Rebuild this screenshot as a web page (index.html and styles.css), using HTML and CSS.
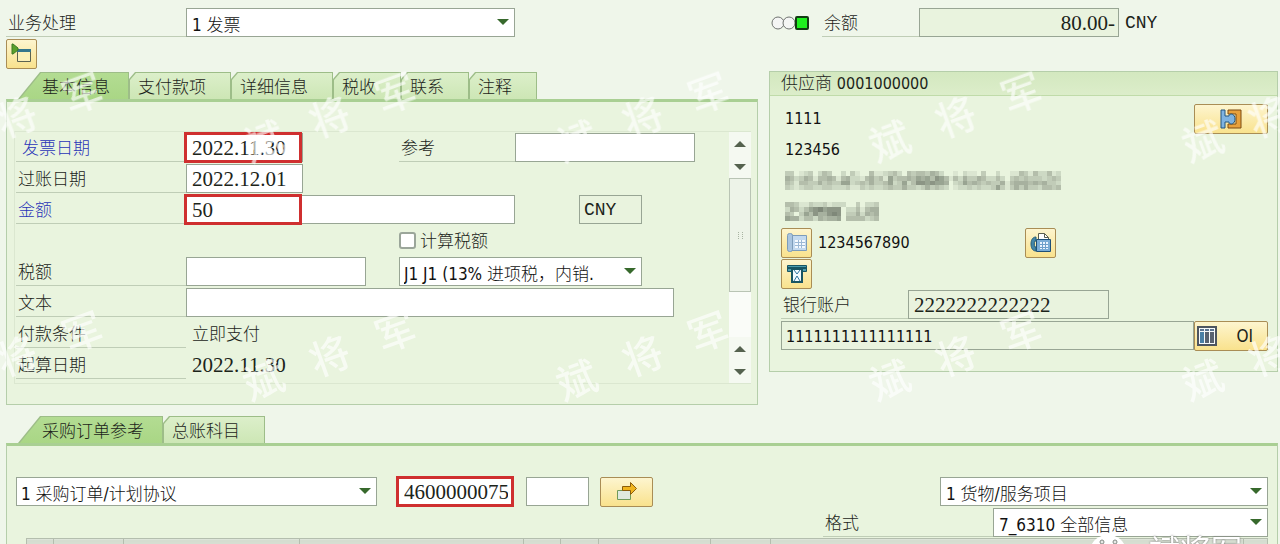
FILE: index.html
```html
<!DOCTYPE html>
<html lang="zh-CN">

<head>
  <meta charset="utf-8">
  <title>发票</title>
  <link rel="stylesheet" href="styles.css">
</head>

<body>
  <main class="page">
    <div class="top">
      <section class="left">
        <div class="row">
          <label class="label wide-label" for="action">业务处理</label>
          <div class="select action-select">
            <select id="action"><option>1 发票</option></select>
          </div>
        </div>
        <div class="row">
          <button class="icon-button" type="button" aria-label="Open">
            <svg width="21" height="21" viewBox="0 0 21 21">
              <path d="M6.500 6.500h13v12h-13z" fill="#fbf0b8" stroke="#5c6350"/>
              <path d="M6 6h14v3H6z" fill="#35768c"/>
              <path d="M1 1h1l5 4v2l-5 4H1z" fill="#5aa02c" stroke="#3d7a25"/>
            </svg>
          </button>
        </div>

        <nav class="tabs">
          <a class="tab active" href="#basic"><span>基本信息</span></a>
          <a class="tab" href="#payment"><span>支付款项</span></a>
          <a class="tab" href="#details"><span>详细信息</span></a>
          <a class="tab short" href="#tax"><span>税收</span></a>
          <a class="tab short" href="#contact"><span>联系</span></a>
          <a class="tab short" href="#note"><span>注释</span></a>
        </nav>
        <div class="panel basic" id="basic">
          <div class="form-box">
            <div class="form">
              <label class="label required indent" for="invDate">发票日期</label>
              <div class="cell marked">
                <input class="date" id="invDate" value="2022.11.30">
              </div>
              <label class="label" for="reference">参考</label>
              <input class="mid" id="reference">

              <label class="label" for="postDate">过账日期</label>
              <div class="cell rest"><input class="date" id="postDate" value="2022.12.01"></div>

              <label class="label required" for="amount">金额</label>
              <div class="cell two marked">
                <input class="full" id="amount" value="50">
              </div>
              <input class="currency mono readonly" aria-label="货币" value="CNY" readonly>

              <div class="cell check">
                <input type="checkbox" id="calcTax">
                <label for="calcTax">计算税额</label>
              </div>

              <label class="label" for="tax">税额</label>
              <input class="mid" id="tax">
              <div class="select tax-select">
                <select aria-label="税码"><option>J1 J1 (13% 进项税，内销.</option></select>
              </div>

              <label class="label" for="text">文本</label>
              <input class="long" id="text">

              <span class="label">付款条件</span>
              <span class="value rest">立即支付</span>

              <span class="label">起算日期</span>
              <span class="value digits rest">2022.11.30</span>
            </div>
            <div class="scrollbar">
              <button class="arrow up" type="button" aria-label="Up"></button>
              <button class="arrow down" type="button" aria-label="Down"></button>
              <div class="thumb"></div>
              <div class="track"></div>
              <button class="arrow up" type="button" aria-label="Page up"></button>
              <button class="arrow down" type="button" aria-label="Page down"></button>
            </div>
          </div>
        </div>
      </section>

      <section class="right">
        <div class="row balance-row">
          <svg class="lights" width="38" height="16" viewBox="0 0 38 16">
            <circle cx="7" cy="8" r="6" fill="#f4f5f4" stroke="#6f7370"/>
            <circle cx="18" cy="8" r="6" fill="#f4f5f4" stroke="#6f7370"/>
            <rect x="25" y="2" width="12" height="12" rx="1" fill="#1ff01f" stroke="#123c12" stroke-width="2"/>
          </svg>
          <label class="label balance-label" for="balance">余额</label>
          <input class="balance readonly" id="balance" value="80.00-" readonly>
          <span class="mono unit">CNY</span>
        </div>

        <div class="group">
          <h2>供应商 <span>0001000000</span></h2>
          <div class="group-body">
            <div class="row spread">
              <span class="vendor">1111</span>
              <button class="icon-button wide" type="button" aria-label="Display vendor">
                <svg width="22" height="20" viewBox="0 0 22 20">
                  <path d="M8 1h13v18H8v-4h8V5H8z" fill="#e8a13c" stroke="#7a4a12"/>
                  <path d="M1 1h4v6h4c0-3 6-3 6 3s-6 6-6 3H5v6H1z" fill="#7fb3e0" stroke="#23557f"/>
                </svg>
              </button>
            </div>
            <div class="row"><span class="vendor">123456</span></div>
            <div class="row"><svg class="mosaic" data-mosaic="address" width="276" height="19"></svg></div>
            <div class="row"><svg class="mosaic" data-mosaic="city" width="94" height="19"></svg></div>
            <div class="row phone-row">
              <button class="icon-button" type="button" aria-label="Phone">
                <svg width="22" height="21" viewBox="0 0 22 21">
                  <path d="M5.500 3.500h15v15h-15z" fill="#c3d9ef" stroke="#7d9cba"/>
                  <rect x="1.500" y="1.500" width="5" height="18" rx="2" fill="#a9c4df" stroke="#7d9cba"/>
                  <path d="M9 8h10v8H9z" fill="#f4f9ff"/>
                  <path d="M9 10.500h10M9 13.500h10M12.500 8v8M15.500 8v8" stroke="#9db9d6"/>
                </svg>
              </button>
              <span class="phone">1234567890</span>
              <button class="icon-button" type="button" aria-label="Fax">
                <svg width="22" height="21" viewBox="0 0 22 21">
                  <path d="M8.500 8V1.500h6l4 4V8" fill="#fff" stroke="#5b5f50"/>
                  <path d="M14.500 1.500v4h4" fill="none" stroke="#5b5f50"/>
                  <path d="M6.500 7.500h14v12h-14z" fill="#79acd6" stroke="#1f4f76"/>
                  <path d="M10 10h8v7h-8z" fill="#eaf4ff"/>
                  <path d="M10 12.500h8M10 15.500h8M12.500 10v7M15.500 10v7" stroke="#6d9fca"/>
                  <path d="M6 5C2 5 1 9 1 12s1 7 5 7v-4H5c-1-2-1-4 0-6h1z" fill="#4386a8" stroke="#245c78"/>
                </svg>
              </button>
            </div>
            <div class="row">
              <button class="icon-button" type="button" aria-label="Letter">
                <svg width="22" height="20" viewBox="0 0 22 20">
                  <path d="M1.500 1.500h19v6h-19z" fill="#4d9dad" stroke="#195563"/>
                  <path d="M2 4h18" stroke="#195563" stroke-width="2"/>
                  <path d="M6 5h10v13H6z" fill="#f3faff" stroke="#195563" stroke-width="2"/>
                  <path d="M8 6l3 4 3-4M8 17l3-5M14 17l-3-5" fill="none" stroke="#2f74a0"/>
                </svg>
              </button>
            </div>
            <div class="row">
              <label class="label bank-label" for="bank">银行账户</label>
              <input class="bank readonly" id="bank" value="2222222222222" readonly>
            </div>
            <div class="row">
              <input class="iban readonly" aria-label="账号" value="1111111111111111" readonly>
              <button class="icon-button wide oi" type="button">
                <svg width="20" height="20" viewBox="0 0 20 20">
                  <path d="M1 1h18v18H1z" fill="#f5f8fa" stroke="#4d5560" stroke-width="2"/>
                  <path d="M3 3h4v2H3zM8 3h4v2H8zM13 3h4v2h-4z" fill="#5b7390"/>
                  <path d="M3 6h4v11H3z" fill="#4a7fa5"/>
                  <path d="M8 6h4v11H8zM13 6h4v11h-4z" fill="#596270"/>
                </svg>
                <span>OI</span>
              </button>
            </div>
          </div>
        </div>
      </section>
    </div>

    <section class="items">
      <nav class="tabs">
        <a class="tab active long-tab" href="#po"><span>采购订单参考</span></a>
        <a class="tab" href="#gl"><span>总账科目</span></a>
      </nav>
      <div class="panel po" id="po">
        <div class="row">
          <div class="select po-select">
            <select aria-label="参考凭证类别"><option>1 采购订单/计划协议</option></select>
          </div>
          <div class="marked po-number">
            <input aria-label="采购订单" value="4600000075">
          </div>
          <input class="po-item" aria-label="项目">
          <button class="icon-button go" type="button" aria-label="More">
            <svg width="22" height="20" viewBox="0 0 22 20">
              <path d="M1.500 8.500h13v9h-13z" fill="#dfe9df" stroke="#6f9a5a"/>
              <path d="M6.500 4.500h8v-4l6 6-6 6v-4h-8z" fill="#f0b41e" stroke="#8a5c0c"/>
            </svg>
          </button>
          <div class="select goods-select">
            <select aria-label="货物/服务"><option>1 货物/服务项目</option></select>
          </div>
        </div>
        <div class="row end">
          <label class="label layout-label" for="layout">格式</label>
          <div class="select layout-select">
            <select id="layout"><option>7_6310 全部信息</option></select>
          </div>
        </div>
        <table class="grid">
          <colgroup>
            <col class="c27"><col class="c70"><col class="c176"><col class="c224"><col class="c37"><col class="c38">
            <col class="c112"><col class="c60"><col><col class="c24">
          </colgroup>
          <thead>
            <tr>
              <th></th><th></th><th></th><th></th><th></th><th></th><th></th><th></th><th></th><th></th>
            </tr>
          </thead>
        </table>
      </div>
    </section>

    <div class="watermark" aria-hidden="true">
      <p><span></span><span>将</span><span>军</span></p>
      <p><span>斌</span><span>将</span><span>军</span></p>
      <p><span>斌</span><span>将</span><span>军</span></p>
      <p><span>斌</span><span>将</span><span>军</span></p>
      <p><span>斌</span><span>将</span><span></span></p>
      <p><span></span><span>将</span><span>军</span></p>
      <p><span>斌</span><span>将</span><span>军</span></p>
      <p><span>斌</span><span>将</span><span>军</span></p>
      <p><span>斌</span><span>将</span><span>军</span></p>
      <p><span>斌</span><span>将</span><span></span></p>
    </div>
    <div class="account">
      <svg width="40" height="30" viewBox="0 0 40 30">
        <ellipse cx="17" cy="14" rx="17" ry="14" fill="#fff"/>
        <circle cx="11" cy="7" r="2" fill="#e8ebe8" stroke="#858a85"/>
        <circle cx="24" cy="7" r="2" fill="#e8ebe8" stroke="#858a85"/>
        <ellipse cx="29" cy="20" rx="11" ry="9" fill="#fff" stroke="#858a85"/>
      </svg>
      <span>斌将军</span>
    </div>
  </main>

  <script src="script.js"></script>
</body>

</html>
```

FILE: styles.css
```css
*,
*::before,
*::after {
  box-sizing: border-box;
}

body {
  margin: 0;
  overflow: hidden;
  background: #eff6ea;
  color: #1c241a;
  font: 300 17px/30px "DejaVu Sans Condensed", "Noto Sans CJK SC", sans-serif;
}

.page {
  position: relative;
  height: 100vh;
  overflow: hidden;
  padding: 7px 2px 0 6px;
}

.top {
  display: grid;
  grid-template-columns: 752fr 509fr;
  gap: 11px;
}

.row {
  display: flex;
  align-items: center;
  height: 31px;
}

input,
select,
button {
  font: inherit;
  color: inherit;
  margin: 0;
}

input,
select {
  height: 29px;
  min-width: 0;
  padding: 1px 5px 0;
  border: 1px solid #98a594;
  border-radius: 0;
  background: #fff;
}

input {
  font: 21px "Liberation Serif", serif;
}

.readonly {
  background: #e9f3de;
}

.digits {
  font: 21px/30px "Liberation Serif", serif;
}

.mono {
  font: 18px "Liberation Mono", monospace;
}

.label {
  height: 29px;
  padding-left: 2px;
  border-bottom: 1px solid #bfcdb6;
  white-space: nowrap;
}

.required {
  color: #2a35b8;
}

.indent {
  padding-left: 6px;
}

.wide-label {
  width: 180px;
}

.select {
  position: relative;
}

.select select {
  display: block;
  width: 100%;
  appearance: none;
  color: #111;
}

.select::after {
  content: "";
  position: absolute;
  top: 11px;
  right: 6px;
  border: 6px solid transparent;
  border-top-color: #37692c;
  border-bottom: 0;
  pointer-events: none;
}

.action-select {
  width: 329px;
}

/* buttons */
.icon-button {
  display: flex;
  align-items: center;
  justify-content: center;
  width: 31px;
  height: 30px;
  padding: 0;
  border: 1px solid #a98d55;
  border-radius: 2px;
  background: linear-gradient(#fdf5cf, #f9e28d);
}

.icon-button.wide {
  width: 74px;
}

.icon-button.go {
  width: 53px;
  margin-left: 11px;
}

.oi {
  justify-content: space-between;
  padding: 0 14px 0 2px;
}

/* tabs */
.tabs {
  display: flex;
  height: 27px;
}

.left .tabs {
  margin-top: 3px;
}

.tab {
  width: 102px;
  padding: 1px;
  background: #9dbd88;
  color: inherit;
  text-decoration: none;
  white-space: nowrap;
  clip-path: polygon(0 7px, 6px 0, 100% 0, 100% 100%, 0 100%);
}

.tab span {
  display: block;
  height: 27px;
  padding-left: 8px;
  background: linear-gradient(#dcefca, #cce6b4);
  line-height: 28px;
  clip-path: polygon(0 7px, 6px 0, 100% 0, 100% 100%, 0 100%);
}

.tab.active {
  width: 111px;
  margin-left: 12px;
  clip-path: polygon(0 100%, 22px 0, 100% 0, 100% 100%);
}

.tab.active.long-tab {
  width: 145px;
}

.tab.active span {
  padding-left: 23px;
  background: linear-gradient(#b3dc92, #a9d685);
  clip-path: polygon(0 100%, 22px 0, 100% 0, 100% 100%);
}

.tab.short {
  width: 68px;
}

.panel {
  border: 1px solid #b5ceaa;
  border-top: 3px solid #a9cf93;
  background: #e9f4de;
}

/* basic data */
.basic {
  padding: 29px 6px 20px 7px;
}

.form-box {
  display: flex;
  height: 253px;
  border: 1px solid #dbe7d0;
  border-width: 1px 0 1px 1px;
}

.form {
  flex: 1;
  display: grid;
  grid-template-columns: 170px 213px 116px 1fr;
  grid-auto-rows: 31px;
  align-items: center;
  padding-left: 1px;
}

.cell {
  display: flex;
  align-items: center;
}

.two {
  grid-column: span 2;
}

.rest {
  grid-column: span 3;
}

.marked {
  position: relative;
}

/* red frame around the values to fill in */
.marked::after {
  content: "";
  position: absolute;
  top: -1px;
  left: -2px;
  width: 118px;
  height: 31px;
  border: 3px solid #cf2f2f;
  pointer-events: none;
}

.date {
  width: 117px;
}

.full {
  width: 100%;
}

.mid {
  width: 180px;
}

.long {
  grid-column: span 3;
  width: 488px;
}

.currency {
  width: 63px;
  margin-left: 64px;
  padding: 0 4px;
}

.check {
  grid-column: 3 / span 2;
  gap: 4px;
}

.check input {
  appearance: none;
  width: 17px;
  height: 17px;
  border: 2px solid #9ba69a;
  border-radius: 3px;
}

.tax-select {
  grid-column: span 2;
  width: 243px;
}

.tax-select select,
.po-select select {
  padding-left: 4px;
}

.value {
  padding-left: 6px;
}

/* scrollbar */
.scrollbar {
  display: flex;
  flex-direction: column;
  width: 22px;
  background: #fafcf8;
}

.arrow {
  display: flex;
  align-items: center;
  justify-content: center;
  height: 23px;
  padding: 0;
  border: 0;
  background: #f5f9f1;
}

.arrow::before {
  content: "";
  border: 6px solid transparent;
}

.up::before {
  border-top: 0;
  border-bottom-color: #55624e;
}

.down::before {
  border-bottom: 0;
  border-top-color: #55624e;
}

.thumb {
  display: flex;
  align-items: center;
  justify-content: center;
  height: 114px;
  border: 1px solid #b9c4b4;
  background: #edf3e8;
}

.thumb::before {
  content: "";
  width: 5px;
  height: 7px;
  border: 1px dotted #a8b3a2;
  border-width: 0 1px;
}

.track {
  flex: 1;
}

/* vendor */
.lights {
  margin: 0 13px 0 2px;
}

.balance-label {
  width: 97px;
}

.balance {
  width: 200px;
  padding: 1px 3px 0;
  text-align: right;
}

.unit {
  margin-left: 6px;
}

.group {
  margin-top: 33px;
  border: 1px solid #b5ceaa;
  background: #e9f4de;
}

.group h2 {
  margin: 0;
  padding-left: 11px;
  border-bottom: 1px solid #c0dba9;
  background: linear-gradient(#d3e8bf, #dcedca);
  font-size: 17px;
  font-weight: 300;
  line-height: 22px;
}

.group h2 span {
  font-size: 16px;
}

.group-body {
  padding: 7px 9px 20px 11px;
}

.spread {
  justify-content: space-between;
}

.vendor,
.phone {
  padding-left: 4px;
  color: #111;
  font-size: 16px;
}

.mosaic {
  margin-left: 4px;
}

.phone {
  width: 213px;
  padding-left: 6px;
}

.bank-label {
  width: 127px;
}

.bank {
  width: 201px;
}

.iban {
  flex: 1;
  padding: 1px 4px 0;
  color: #111;
  font: 16px "DejaVu Sans Condensed", sans-serif;
}

/* order items */
.items {
  margin-top: 11px;
}

.po {
  padding: 30px 9px 0;
}

.po-select {
  width: 361px;
}

.po-number {
  display: flex;
  margin: 0 12px 0 21px;
}

.po-number input {
  width: 116px;
}

.po-item {
  width: 63px;
}

.goods-select {
  width: 328px;
  margin-left: auto;
}

.end {
  justify-content: flex-end;
}

.layout-label {
  width: 170px;
}

.layout-select {
  width: 275px;
}

.grid {
  width: calc(100% - 10px);
  margin-left: 10px;
  table-layout: fixed;
  border-collapse: collapse;
}

.grid th {
  height: 28px;
  border: 1px solid #b4beae;
  background: linear-gradient(#d4dccf, #e6ebe2);
}

.c24 { width: 24px; }
.c27 { width: 27px; }
.c37 { width: 37px; }
.c38 { width: 38px; }
.c60 { width: 60px; }
.c70 { width: 70px; }
.c112 { width: 112px; }
.c176 { width: 176px; }
.c224 { width: 224px; }

/* watermark */
.watermark {
  position: absolute;
  top: 88px;
  left: -140px;
  display: grid;
  grid-template-columns: repeat(5, 313px);
  grid-auto-rows: 239px;
  color: #fff;
  opacity: 0.65;
  pointer-events: none;
}

.watermark p {
  display: grid;
  grid-template-columns: repeat(3, 40px);
  gap: 30px;
  align-self: start;
  justify-self: center;
  margin: 0;
  font-size: 40px;
  font-weight: 500;
  line-height: 60px;
  transform: rotate(-20deg);
}

.account {
  position: absolute;
  top: 535px;
  right: 38px;
  display: flex;
  gap: 18px;
  color: #fff;
  font-size: 31px;
  font-weight: 400;
  line-height: 32px;
  text-shadow: 0 0 2px #666;
}
```

FILE: script.js
```javascript
// Pixelated address lines, each digit is the darkness of one cell
const mosaics = {
  address: [
    "33012302430020310041123420434435420010211030020011431422412",
    "54235414454145221453416344546564764142533542242034343332343",
    "43144335343366234353346236247767665023645434335145554545332",
    "32123322332223113232234335332353432012232322363135353324434"
  ],
  city: [
    "44311322312220030223",
    "25424678677702241455",
    "43036475578703352545",
    "65524425455604444234"
  ]
};

document.querySelectorAll("[data-mosaic]").forEach(svg => {
  const rows = mosaics[svg.dataset.mosaic];
  svg.setAttribute("viewBox", `0 0 ${rows[0].length} ${rows.length}`);
  svg.setAttribute("preserveAspectRatio", "none");
  svg.setAttribute("shape-rendering", "crispEdges");
  rows.forEach((row, y) => {
    [...row].forEach((value, x) => {
      const rect = document.createElementNS("http://www.w3.org/2000/svg", "rect");
      rect.setAttribute("x", x);
      rect.setAttribute("y", y);
      rect.setAttribute("width", 1);
      rect.setAttribute("height", 1);
      rect.setAttribute("fill", "#4a5346");
      rect.setAttribute("fill-opacity", value / 12);
      svg.appendChild(rect);
    });
  });
});
```
